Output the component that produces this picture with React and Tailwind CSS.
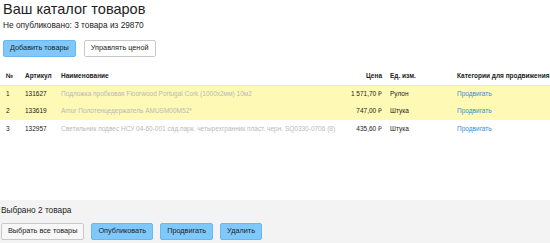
import React from 'react';

const rows = [
  { n: 1, sku: '131627', name: 'Подложка пробковая Floorwood Portugal Cork (1000x2мм) 10м2', price: '1 571,70 ₽', unit: 'Рулон', selected: true },
  { n: 2, sku: '133619', name: 'Amur Полотенцедержатель AMUSM00M52*', price: '747,00 ₽', unit: 'Штука', selected: true },
  { n: 3, sku: '132957', name: 'Светильник подвес НСУ 04-60-001 сад.парк. четырехгранник пласт. черн. SQ0330-0706 (8)', price: '435,60 ₽', unit: 'Штука', selected: false },
];

const App = () => {
  return (
    <div className="w-[550px] h-[243px] flex flex-col bg-white text-[#222] overflow-hidden" style={{ fontFamily: '"Liberation Sans", Arial, sans-serif' }}>
      <div className="px-[3px] pt-[1px]">
        <h1 className="text-[14.5px] leading-[17px]">Ваш каталог товаров</h1>
        <p className="text-[8.3px] leading-[12px] mt-[1px]">Не опубликовано: 3 товара из 29870</p>
        <div className="flex gap-[8px] mt-[9px]">
          <button className="h-[17px] px-[6px] text-[7.3px] bg-[#7ec8fb] border border-[#6ab8ef] rounded-[2px]">Добавить товары</button>
          <button className="h-[17px] px-[6px] text-[7.3px] bg-white border border-[#c9c9c9] rounded-[2px]">Управлять ценой</button>
        </div>
      </div>

      <table className="mt-[11px] w-full table-fixed text-[6.5px] border-collapse">
        <thead>
          <tr className="h-[17px] border-b border-[#e4e4e4] font-bold text-left">
            <th className="pl-[6px] w-[25px] text-left">№</th>
            <th className="w-[36px] text-left">Артикул</th>
            <th className="text-left">Наименование</th>
            <th className="text-right pr-[8px] w-[58px]">Цена</th>
            <th className="text-left w-[67px]">Ед. изм.</th>
            <th className="text-left w-[93px] whitespace-nowrap">Категории для продвижения</th>
          </tr>
        </thead>
        <tbody>
          {rows.map((r) => (
            <tr key={r.n} className={r.selected ? 'h-[17.5px] bg-[#fefab5]' : 'h-[17.5px]'}>
              <td className="pl-[6px]">{r.n}</td>
              <td>{r.sku}</td>
              <td className="text-[#b9b9b9] whitespace-nowrap">{r.name}</td>
              <td className="text-right pr-[8px] whitespace-nowrap">{r.price}</td>
              <td>{r.unit}</td>
              <td className="text-[#3a8ed0]">Продвигать</td>
            </tr>
          ))}
        </tbody>
      </table>

      <div className="mt-auto h-[43px] bg-[#f3f3f3] px-[1px] pt-[4px]">
        <p className="text-[8.3px] leading-[12px] text-[#222]">Выбрано 2 товара</p>
        <div className="flex gap-[7px] mt-[7px]">
          <button className="h-[17px] px-[6px] text-[7.3px] bg-[#f7f7f7] border border-[#c9c9c9] rounded-[2px]">Выбрать все товары</button>
          <button className="h-[17px] px-[6px] text-[7.3px] bg-[#7ec8fb] border border-[#6ab8ef] rounded-[2px]">Опубликовать</button>
          <button className="h-[17px] px-[6px] text-[7.3px] bg-[#7ec8fb] border border-[#6ab8ef] rounded-[2px]">Продвигать</button>
          <button className="h-[17px] px-[6px] text-[7.3px] bg-[#7ec8fb] border border-[#6ab8ef] rounded-[2px]">Удалить</button>
        </div>
      </div>
    </div>
  );
};

export default App;
